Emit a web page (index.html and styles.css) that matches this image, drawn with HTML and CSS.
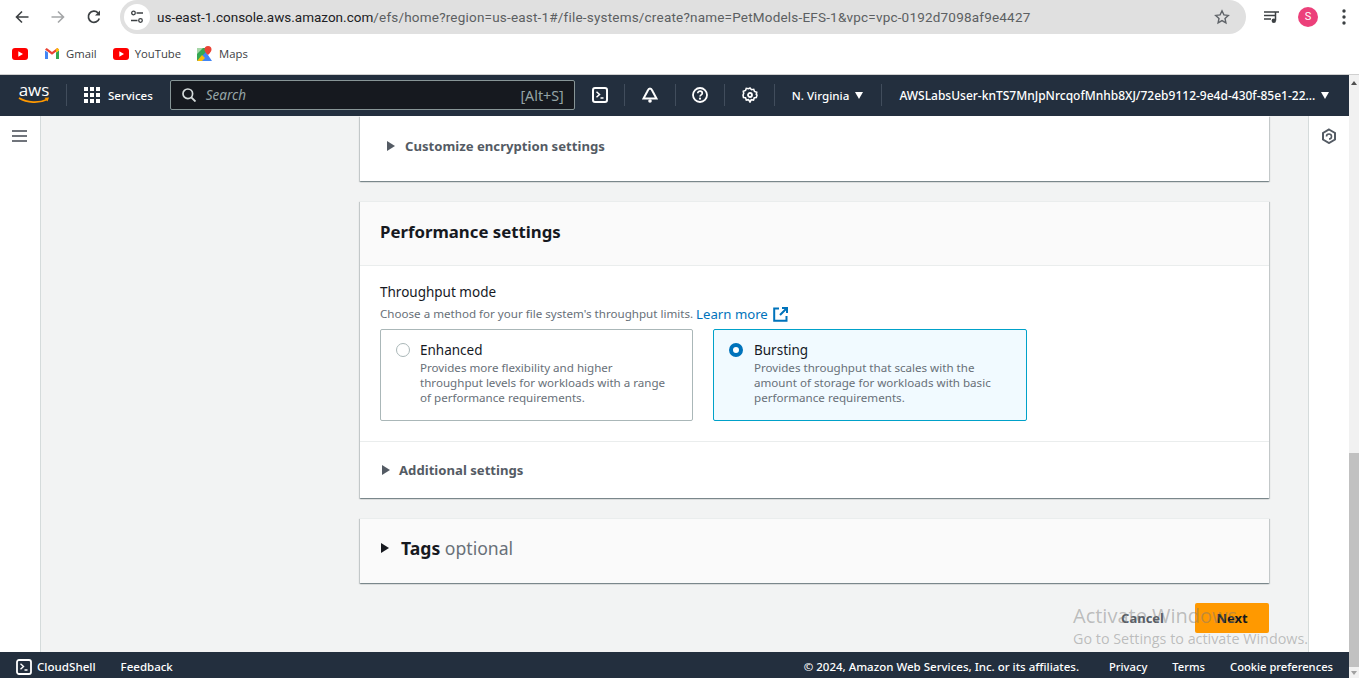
FILE: index.html
```html
<!DOCTYPE html>
<html>
<head lang="en">
    <meta charset="UTF-8">
    <title>Create file system</title>
    <link rel="stylesheet" href="styles.css">
</head>
<body>
<div class="toolbar">
    <svg class="tool" width="16" height="16" viewBox="0 0 16 16"><path d="M14.5 8H2.5M8 2.5 2.5 8 8 13.5" fill="none" stroke="#3c4043" stroke-width="1.6"/></svg>
    <svg class="tool tool-off" width="16" height="16" viewBox="0 0 16 16"><path d="M1.5 8h12M8 2.5 13.5 8 8 13.5" fill="none" stroke="#a4a6a8" stroke-width="1.6"/></svg>
    <svg class="tool" width="16" height="16" viewBox="0 0 16 16"><path d="M13.3 9.5A5.6 5.6 0 1 1 12 3.8" fill="none" stroke="#3c4043" stroke-width="1.7"/><path d="M14 1.5v5H9z" fill="#3c4043"/></svg>
    <div class="address">
        <span class="site-btn">
            <svg width="14" height="14" viewBox="0 0 14 14"><g fill="none" stroke="#3c4043" stroke-width="1.3"><circle cx="3.5" cy="3" r="1.8"/><path d="M6.5 3H13M1 10.5h6.5"/><circle cx="10.5" cy="10.5" r="1.8"/></g></svg>
        </span>
        <span class="url"><span class="url-host">us-east-1.console.aws.amazon.com</span>/efs/home?region=us-east-1#/file-systems/create?name=PetModels-EFS-1&amp;vpc=vpc-0192d7098af9e4427</span>
        <svg class="star" width="16" height="16" viewBox="0 0 16 16"><path d="M8 1.8l1.9 4.1 4.4.5-3.3 3 .9 4.4L8 11.6l-3.9 2.2.9-4.4-3.3-3 4.4-.5z" fill="none" stroke="#5f6368" stroke-width="1.4"/></svg>
    </div>
    <svg class="media" width="16" height="12" viewBox="0 0 16 12"><path d="M0 1h11M0 4.500h11M0 8h7" stroke="#3c4043" stroke-width="1.500"/><path d="M11.500 9.500V1H15" fill="none" stroke="#3c4043" stroke-width="1.500"/><circle cx="9.800" cy="9.700" r="2.200" fill="#3c4043"/></svg>
    <span class="avatar">S</span>
    <svg class="dots" width="4" height="16" viewBox="0 0 4 16"><circle cx="2" cy="2" r="1.700"/><circle cx="2" cy="8" r="1.700"/><circle cx="2" cy="14" r="1.700"/></svg>
</div>

<div class="bookmarks">
    <svg class="yt yt-first" width="16" height="12" viewBox="0 0 16 12"><rect width="16" height="12" rx="3" fill="#f00"/><path d="M6.300 3.300v5.400L11 6z" fill="#fff"/></svg>
    <svg class="bm-icon" width="14" height="11" viewBox="0 0 14 11"><path d="M0 2.500V11h3V4.500z" fill="#4285f4"/><path d="M14 2.500V11h-3V4.500z" fill="#34a853"/><path d="M0 1.500 7 6.800l7-5.300L12.300 0 7 3.900 1.700 0z" fill="#ea4335"/><path d="M11 4.500 14 2.500V1.500L12.300 0 11 1z" fill="#fbbc04"/></svg>
    <span class="bm-text">Gmail</span>
    <svg class="yt" width="16" height="12" viewBox="0 0 16 12"><rect width="16" height="12" rx="3" fill="#f00"/><path d="M6.300 3.300v5.400L11 6z" fill="#fff"/></svg>
    <span class="bm-text">YouTube</span>
    <svg class="bm-icon" width="15" height="15" viewBox="0 0 15 15"><path d="M0 2h9v13H0z" fill="#34a853"/><path d="M0 15 9 6l6 9z" fill="#4285f4"/><path d="M0 15 5 9l3 3-3 3z" fill="#fbbc04"/><path d="M0 2h6L0 8z" fill="#a5d6a7"/><path d="M11 0a3.500 3.500 0 0 1 3.500 3.500C14.500 6 11 9 11 9S7.500 6 7.500 3.500A3.500 3.500 0 0 1 11 0z" fill="#ea4335"/></svg>
    <span class="bm-text">Maps</span>
</div>

<div class="app">
    <div class="app-main">
        <nav class="topnav">
            <div class="aws-logo">
                <span class="aws-word">aws</span>
                <svg width="32" height="7" viewBox="0 0 32 7"><path d="M1 1c8 5 20 5.500 28 1.500" fill="none" stroke="#f90" stroke-width="1.800"/><path d="M26.500 .800 31 .500l-1.500 4z" fill="#f90"/></svg>
            </div>
            <span class="nav-div"></span>
            <svg class="grid-icon" width="16" height="16" viewBox="0 0 16 16" fill="#fff"><rect width="4" height="4"/><rect x="6" width="4" height="4"/><rect x="12" width="4" height="4"/><rect y="6" width="4" height="4"/><rect x="6" y="6" width="4" height="4"/><rect x="12" y="6" width="4" height="4"/><rect y="12" width="4" height="4"/><rect x="6" y="12" width="4" height="4"/><rect x="12" y="12" width="4" height="4"/></svg>
            <span class="nav-services">Services</span>
            <div class="search">
                <svg width="14" height="14" viewBox="0 0 14 14"><circle cx="5.800" cy="5.800" r="4.800" fill="none" stroke="#d5dbdb" stroke-width="1.700"/><path d="M9.300 9.300 13.500 13.500" stroke="#d5dbdb" stroke-width="1.900"/></svg>
                <span class="search-text">Search</span>
                <span class="search-key">[Alt+S]</span>
            </div>
            <svg class="nav-icon" width="16" height="16" viewBox="0 0 16 16"><rect x="1" y="1" width="14" height="14" rx="2" fill="none" stroke="#fff" stroke-width="2"/><path d="M4.500 4.800 7.500 7.500l-3 2.700M8.500 11h3" fill="none" stroke="#fff" stroke-width="1.500"/></svg>
            <span class="nav-div"></span>
            <svg class="nav-icon" width="16" height="16" viewBox="0 0 16 16"><path d="M8 1.500C6.500 1.500 6 3 5 5L1.500 11.500h13L11 5C10 3 9.500 1.500 8 1.500z" fill="none" stroke="#fff" stroke-width="2"/><circle cx="8" cy="14" r="1.800" fill="#fff"/></svg>
            <span class="nav-div div-bell"></span>
            <svg class="nav-icon" width="16" height="16" viewBox="0 0 16 16"><circle cx="8" cy="8" r="7" fill="none" stroke="#fff" stroke-width="1.800"/><path d="M5.800 6.200C5.800 3.500 10.300 3.600 10.300 6.200 10.300 7.900 8 7.800 8 9.600" fill="none" stroke="#fff" stroke-width="1.700"/><circle cx="8" cy="11.700" r="1.100" fill="#fff"/></svg>
            <span class="nav-div"></span>
            <svg class="nav-icon" width="16" height="16" viewBox="0 0 16 16"><path d="M8 1l1.500 1.700 2.200-.4.800 2.200 2.200.8-.4 2.200L15 8l-.7 2.500-2 .3-.8 2.200-2.200-.4L8 15l-1.500-2.400-2.200.4-.8-2.200-2-.3L1 8l.7-1.500-.4-2.200 2.200-.8.800-2.200 2.200.4z" fill="none" stroke="#fff" stroke-width="1.600"/><circle cx="8" cy="8" r="2" fill="none" stroke="#fff" stroke-width="1.800"/></svg>
            <span class="nav-div"></span>
            <span class="nav-label nav-region">N. Virginia</span>
            <span class="caret"></span>
            <span class="nav-div div-region"></span>
            <span class="nav-label">AWSLabsUser-knTS7MnJpNrcqofMnhb8XJ/72eb9112-9e4d-430f-85e1-22...</span>
            <span class="caret"></span>
        </nav>

        <div class="workspace">
            <aside class="side-left">
                <svg width="15" height="12" viewBox="0 0 15 12"><path d="M0 1h15M0 6h15M0 11h15" stroke="#414750" stroke-width="1.700"/></svg>
            </aside>

            <main class="content">
                <section class="card card-encrypt">
                    <div class="expander">
                        <span class="tri"></span>
                        <span class="exp-label">Customize encryption settings</span>
                    </div>
                </section>

                <section class="card">
                    <header class="card-head">
                        <h2>Performance settings</h2>
                    </header>
                    <div class="card-body">
                        <div class="field-label">Throughput mode</div>
                        <div class="field-desc">Choose a method for your file system's throughput limits. <a class="learn">Learn more</a>
                            <svg class="ext" width="15" height="15" viewBox="0 0 15 15"><path d="M6 1.500H1.200v12.300h12.300V9" fill="none" stroke="#0073bb" stroke-width="2"/><path d="M9 1h5v5M14 1 7 8" fill="none" stroke="#0073bb" stroke-width="2"/></svg>
                        </div>
                        <div class="tiles">
                            <div class="tile">
                                <span class="radio"></span>
                                <div>
                                    <div class="tile-name">Enhanced</div>
                                    <div class="tile-desc">Provides more flexibility and higher throughput levels for workloads with a range of performance requirements.</div>
                                </div>
                            </div>
                            <div class="tile tile-on">
                                <span class="radio radio-on"></span>
                                <div>
                                    <div class="tile-name">Bursting</div>
                                    <div class="tile-desc">Provides throughput that scales with the amount of storage for workloads with basic performance requirements.</div>
                                </div>
                            </div>
                        </div>
                    </div>
                    <div class="card-foot">
                        <span class="tri"></span>
                        <span class="exp-label">Additional settings</span>
                    </div>
                </section>

                <section class="card card-tags">
                    <span class="tri tri-dark"></span>
                    <h2>Tags <span class="optional">optional</span></h2>
                </section>

                <div class="actions">
                    <span class="btn-cancel">Cancel</span>
                    <span class="btn-next">Next</span>
                </div>
            </main>

            <aside class="side-right">
                <svg width="16" height="16" viewBox="0 0 16 16"><path d="M8 1.500 14 5v6.500L8 15l-6-3.500V5z" fill="none" stroke="#545b64" stroke-width="2"/><path d="M5.500 8.500A2.500 2.500 0 1 1 8 11h1.500" fill="none" stroke="#545b64" stroke-width="1.600"/></svg>
            </aside>
        </div>

        <footer class="footer">
            <svg width="16" height="16" viewBox="0 0 16 16"><rect x="1" y="1" width="14" height="14" rx="2" fill="none" stroke="#fff" stroke-width="1.800"/><path d="M4.500 4.800 7.500 7.500l-3 2.700M8.500 11h3" fill="none" stroke="#fff" stroke-width="1.400"/></svg>
            <span class="foot-shell">CloudShell</span>
            <span class="foot-feedback">Feedback</span>
            <span class="foot-copy">© 2024, Amazon Web Services, Inc. or its affiliates.</span>
            <span class="foot-link">Privacy</span>
            <span class="foot-link">Terms</span>
            <span class="foot-link">Cookie preferences</span>
        </footer>

        <div class="activate">
            <div class="activate-big">Activate Windows</div>
            <div class="activate-small">Go to Settings to activate Windows.</div>
        </div>
    </div>

    <div class="scrollbar">
        <span class="arrow-up"></span>
        <span class="thumb"></span>
        <span class="arrow-down"></span>
    </div>
</div>
</body>
</html>
```

FILE: styles.css
```css
* {
    padding: 0;
    margin: 0;
    box-sizing: border-box;
}

html, body {
    height: 678px;
    overflow: hidden;
}

body {
    display: flex;
    flex-direction: column;
    font-family: "Noto Sans", "Open Sans", sans-serif;
    background: #ffffff;
    color: #16191f;
}

/* browser chrome */
.toolbar {
    height: 37px;
    display: flex;
    align-items: flex-start;
    flex-shrink: 0;
}

.tool {
    margin: 9px 6px 0 14px;
    flex-shrink: 0;
}

.toolbar .tool:nth-child(3) {
    margin-right: 18px;
}

.address {
    width: 1126px;
    height: 34px;
    background: #e0e0e0;
    border-radius: 17px;
    display: flex;
    align-items: center;
    padding: 0 16px 0 4px;
    flex-shrink: 0;
}

.site-btn {
    width: 26px;
    height: 26px;
    border-radius: 13px;
    background: #ffffff;
    display: flex;
    align-items: center;
    justify-content: center;
    margin-right: 7px;
}

.url {
    font-family: Roboto, sans-serif;
    font-size: 13.5px;
    letter-spacing: 0.2px;
    color: #5c5f62;
    flex: 1;
    white-space: nowrap;
}

.url-host {
    color: #202124;
    letter-spacing: 0;
}

.media {
    margin: 11px 0 0 18px;
}

.avatar {
    width: 20px;
    height: 20px;
    border-radius: 10px;
    background: #ec407a;
    color: #ffffff;
    font-family: Roboto, sans-serif;
    font-size: 11px;
    line-height: 20px;
    text-align: center;
    margin: 7px 0 0 18px;
}

.dots {
    margin: 9px 0 0 24px;
    fill: #3c4043;
}

.bookmarks {
    height: 38px;
    display: flex;
    align-items: center;
    flex-shrink: 0;
    border-bottom: 1px solid #d0d0d0;
    padding-bottom: 4px;
    font-family: "Open Sans", sans-serif;
    font-size: 11.300px;
    color: #3c4043;
}

.yt {
    margin-right: 6px;
}

.yt-first {
    margin-left: 12px;
    margin-right: 17px;
}

.bm-icon {
    margin-right: 7px;
}

.bm-text {
    margin-right: 16px;
}

/* console */
.app {
    flex: 1;
    display: flex;
    min-height: 0;
}

.app-main {
    flex: 1;
    display: flex;
    flex-direction: column;
    position: relative;
    min-width: 0;
}

.topnav {
    height: 41px;
    background: #232f3e;
    display: flex;
    align-items: center;
    color: #ffffff;
    padding: 0 0 1px 18px;
    flex-shrink: 0;
    font-size: 12px;
}

.aws-logo {
    width: 32px;
    display: flex;
    flex-direction: column;
    align-items: center;
    margin-top: -3px;
}

.aws-word {
    font-family: "Open Sans", sans-serif;
    font-size: 17px;
    line-height: 14px;
}

.nav-div {
    width: 1px;
    height: 22px;
    background: #414d5c;
    margin: 0 17px 0 16px;
    flex-shrink: 0;
}

.grid-icon {
    margin-right: 8px;
}

.nav-services {
    font-size: 11.500px;
    font-weight: 500;
}

.search {
    width: 405px;
    height: 30px;
    margin: 0 17px;
    background: #16191f;
    border: 1px solid #879596;
    border-radius: 2px;
    display: flex;
    align-items: center;
    padding: 0 10px 0 11px;
    font-size: 13.5px;
    color: #95a5a6;
}

.search-text {
    flex: 1;
    margin-left: 10px;
    font-style: italic;
}

.search-key {
    font-size: 14.300px;
}

.nav-icon {
    flex-shrink: 0;
}

.nav-label {
    white-space: nowrap;
    font-weight: 500;
}

.nav-region {
    font-size: 11.600px;
}

.div-bell {
    margin: 0 16px 0 17px;
}

.caret {
    width: 0;
    height: 0;
    border-left: 4.500px solid transparent;
    border-right: 4.500px solid transparent;
    border-top: 7px solid #ffffff;
    margin-left: 6px;
}

.div-region {
    margin-left: 18px;
}

.workspace {
    flex: 1;
    display: flex;
    min-height: 0;
    background: #f2f3f3;
}

.side-left {
    width: 41px;
    background: #ffffff;
    border-right: 1px solid #d5dbdb;
    padding: 14px 0 0 12px;
    flex-shrink: 0;
}

.side-right {
    width: 41px;
    background: #ffffff;
    border-left: 1px solid #d5dbdb;
    padding: 12px 0 0 12px;
    flex-shrink: 0;
}

.side-left svg, .side-right svg {
    display: block;
}

.content {
    flex: 1;
    padding: 0 39px 0 319px;
    display: flex;
    flex-direction: column;
    gap: 20px;
    min-width: 0;
}

.card {
    background: #ffffff;
    border-top: 1px solid #eaeded;
    box-shadow: 0 1px 1px 0 rgba(0, 28, 36, 0.3), 1px 1px 1px 0 rgba(0, 28, 36, 0.15), -1px 1px 1px 0 rgba(0, 28, 36, 0.15);
}

.card-encrypt {
    height: 65px;
    border-top: 0;
}

.expander {
    display: flex;
    align-items: center;
    height: 60px;
    padding-left: 27px;
}

.tri {
    width: 0;
    height: 0;
    border-top: 5px solid transparent;
    border-bottom: 5px solid transparent;
    border-left: 8px solid #545b64;
    flex-shrink: 0;
}

.tri-dark {
    border-left-color: #16191f;
}

.exp-label {
    font-size: 13.150px;
    font-weight: 700;
    color: #545b64;
    margin-left: 10px;
}

.card-foot .exp-label {
    margin-left: 9px;
}

.card-head {
    height: 64px;
    background: #fafafa;
    border-bottom: 1px solid #eaeded;
    padding-left: 20px;
    display: flex;
    align-items: center;
    padding-bottom: 5px;
}

h2 {
    font-size: 16.800px;
    font-weight: 700;
    color: #16191f;
}

.card-body {
    padding: 17px 20px 20px;
    border-bottom: 1px solid #eaeded;
}

.field-label {
    font-size: 13.500px;
    line-height: 18px;
    color: #16191f;
}

.field-desc {
    font-size: 11.600px;
    line-height: 18px;
    margin-top: 4px;
    color: #687078;
    display: flex;
    align-items: center;
    white-space: pre;
}

.learn {
    font-size: 13.200px;
    color: #0073bb;
}

.ext {
    margin-left: 5px;
}

.tiles {
    display: grid;
    grid-template-columns: 313px 314px;
    gap: 20px;
    margin-top: 6px;
}

.tile {
    height: 92px;
    border: 1px solid #aab7b8;
    border-radius: 2px;
    padding: 11px 15px;
    display: flex;
    gap: 10px;
}

.tile-on {
    background: #f1faff;
    border-color: #00a1c9;
    gap: 11px;
}

.radio {
    width: 14px;
    height: 14px;
    border-radius: 7px;
    border: 1px solid #aab7b8;
    margin-top: 2px;
    background: #ffffff;
    flex-shrink: 0;
}

.radio-on {
    border: 4px solid #0073bb;
}

.tile-name {
    font-size: 13.500px;
    line-height: 18px;
}

.tile-desc {
    font-size: 11.600px;
    line-height: 15px;
    margin-top: 1px;
    color: #687078;
    width: 248px;
}

.card-foot {
    height: 56px;
    display: flex;
    align-items: center;
    padding-left: 22px;
    padding-bottom: 1px;
}

.card-tags {
    height: 65px;
    background: #fafafa;
    display: flex;
    align-items: center;
    padding-left: 21px;
    padding-bottom: 6px;
    gap: 12px;
}

.card-tags h2 {
    font-size: 17.600px;
}

.optional {
    font-weight: 400;
    color: #687078;
}

.actions {
    display: flex;
    justify-content: flex-end;
    align-items: center;
    gap: 31px;
    font-size: 13px;
    font-weight: 700;
    color: #545b64;
}

.btn-next {
    width: 74px;
    height: 30px;
    background: #ff9900;
    border-radius: 2px;
    color: #16191f;
    text-align: center;
    line-height: 30px;
}

.footer {
    height: 26px;
    background: #232f3e;
    color: #ffffff;
    font-size: 11.500px;
    font-weight: 500;
    display: flex;
    align-items: center;
    padding: 3px 16px 0;
    flex-shrink: 0;
}

.foot-shell {
    font-size: 11.600px;
    margin-left: 5px;
}

.foot-feedback {
    margin-left: 25px;
    flex: 1;
}

.foot-copy {
    margin-right: 5px;
}

.foot-link {
    font-size: 11.200px;
    margin-left: 25px;
}

.activate {
    position: absolute;
    left: 1073px;
    top: 528px;
    font-family: "Open Sans", sans-serif;
    color: rgba(120, 120, 120, 0.45);
    white-space: nowrap;
    pointer-events: none;
}

.activate-big {
    font-size: 20px;
    line-height: 26px;
}

.activate-small {
    font-size: 14.350px;
    line-height: 20px;
}

/* page scrollbar */
.scrollbar {
    width: 10px;
    background: #f1f1f1;
    display: flex;
    flex-direction: column;
    align-items: center;
    flex-shrink: 0;
}

.arrow-up {
    width: 0;
    height: 0;
    border-left: 3px solid transparent;
    border-right: 3px solid transparent;
    border-bottom: 4px solid #505050;
    margin-top: 6px;
}

.thumb {
    width: 100%;
    height: 214px;
    background: #c1c1c1;
    margin-top: auto;
}

.arrow-down {
    width: 0;
    height: 0;
    border-left: 3px solid transparent;
    border-right: 3px solid transparent;
    border-top: 4px solid #a0a0a0;
    margin: 4px 0 3px;
}
```
